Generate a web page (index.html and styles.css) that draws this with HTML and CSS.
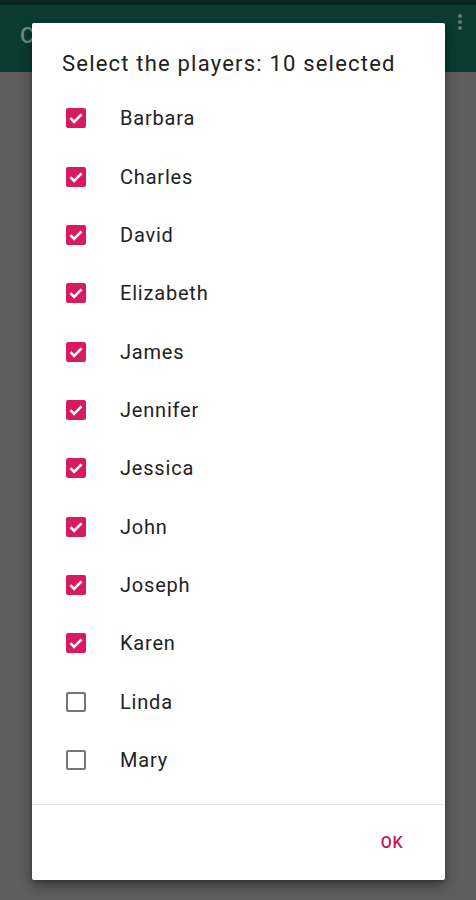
FILE: index.html
```html
<!DOCTYPE html>
<html>
	<head>
		<title>Players</title>
		<link rel="stylesheet" href="styles.css">
	</head>
	<body>
		<div class="statusbar"></div>
		<div class="toolbar">
			<span class="toolbar-title">C</span>
			<span class="overflow"><i></i><i></i><i></i></span>
		</div>
		<div class="dialog">
			<h1 class="dialog-title">Select the players: 10 selected</h1>
			<ul class="players">
				<li class="player checked"><span class="box"><svg viewBox="0 0 20 20"><path d="M4.5 10.2l3.6 3.6 7.4-7.4"/></svg></span>Barbara</li>
				<li class="player checked"><span class="box"><svg viewBox="0 0 20 20"><path d="M4.5 10.2l3.6 3.6 7.4-7.4"/></svg></span>Charles</li>
				<li class="player checked"><span class="box"><svg viewBox="0 0 20 20"><path d="M4.5 10.2l3.6 3.6 7.4-7.4"/></svg></span>David</li>
				<li class="player checked"><span class="box"><svg viewBox="0 0 20 20"><path d="M4.5 10.2l3.6 3.6 7.4-7.4"/></svg></span>Elizabeth</li>
				<li class="player checked"><span class="box"><svg viewBox="0 0 20 20"><path d="M4.5 10.2l3.6 3.6 7.4-7.4"/></svg></span>James</li>
				<li class="player checked"><span class="box"><svg viewBox="0 0 20 20"><path d="M4.5 10.2l3.6 3.6 7.4-7.4"/></svg></span>Jennifer</li>
				<li class="player checked"><span class="box"><svg viewBox="0 0 20 20"><path d="M4.5 10.2l3.6 3.6 7.4-7.4"/></svg></span>Jessica</li>
				<li class="player checked"><span class="box"><svg viewBox="0 0 20 20"><path d="M4.5 10.2l3.6 3.6 7.4-7.4"/></svg></span>John</li>
				<li class="player checked"><span class="box"><svg viewBox="0 0 20 20"><path d="M4.5 10.2l3.6 3.6 7.4-7.4"/></svg></span>Joseph</li>
				<li class="player checked"><span class="box"><svg viewBox="0 0 20 20"><path d="M4.5 10.2l3.6 3.6 7.4-7.4"/></svg></span>Karen</li>
				<li class="player"><span class="box"></span>Linda</li>
				<li class="player"><span class="box"></span>Mary</li>
			</ul>
			<div class="dialog-actions">
				<button class="btn-ok">OK</button>
			</div>
		</div>
	</body>
</html>
```

FILE: styles.css
```css
* {
	margin: 0; padding: 0;
	box-sizing: border-box;
}

body {
	font-family: Roboto, "Noto Sans", sans-serif;
	background: #5e5e5e;
	height: 900px;
	overflow: hidden;
}

.statusbar {
	height: 5px;
	background: #082520;
}

.toolbar {
	height: 67px;
	background: #0b3b31;
	display: flex;
	align-items: center;
	justify-content: space-between;
	padding: 0 20px 6px 20px;
}

.toolbar-title {
	color: #6b8a84;
	font-size: 22px;
	font-weight: 500;
}

.overflow {
	display: flex;
	flex-direction: column;
	gap: 2px;
	margin-right: -6px;
	margin-top: -28px;
}

.overflow i {
	width: 4px; height: 4px;
	border-radius: 50%;
	background: #5f7a74;
}

/* dialog sits above the scrim */
.dialog {
	position: absolute;
	left: 32px; top: 23px;
	width: 413px; height: 857px;
	background: #fff;
	border-radius: 2px;
	box-shadow: 0 6px 14px rgba(0,0,0,0.35), 0 2px 4px rgba(0,0,0,0.25);
	display: flex;
	flex-direction: column;
}

.dialog-title {
	font-size: 22px;
	font-weight: 400;
	letter-spacing: 1.2px;
	color: #212121;
	line-height: 28px;
	padding: 27px 0 0 30px;
	height: 66px;
	white-space: nowrap;
}

.players {
	list-style: none;
}

.player {
	height: 58.36px;
	display: flex;
	align-items: center;
	padding-left: 34px;
	font-size: 20px;
	letter-spacing: 0.8px;
	color: #222;
}

.box {
	width: 20px; height: 20px;
	border: 2px solid #757575;
	border-radius: 2px;
	margin-right: 34px;
	display: flex;
}

.player.checked .box {
	background: #d81b60;
	border-color: #d81b60;
}

.box svg {
	width: 20px; height: 20px;
	margin: -2px;
	fill: none;
	stroke: #fff;
	stroke-width: 2.6;
}

.dialog-actions {
	margin-top: 15px;
	border-top: 1px solid #e6e6e6;
	flex: 1;
	display: flex;
	align-items: center;
	justify-content: flex-end;
	padding-right: 42px;
}

.btn-ok {
	border: none;
	background: none;
	font-family: Roboto, sans-serif;
	font-size: 16px;
	font-weight: 500;
	color: #c2185b;
	letter-spacing: 0.5px;
}
```
